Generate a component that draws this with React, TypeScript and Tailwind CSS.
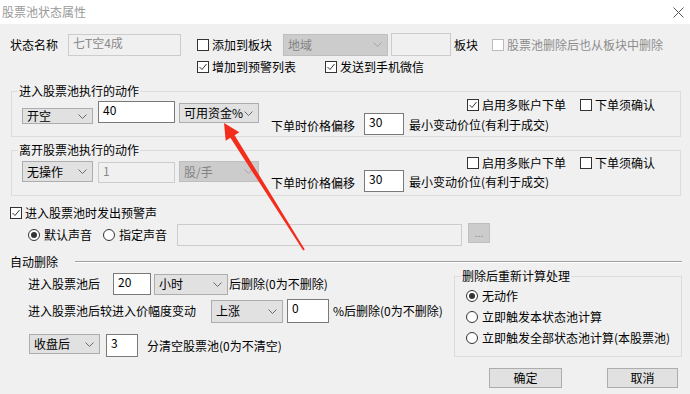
import { ReactNode } from "react";

function Chevron({ muted }: { muted?: boolean }) {
  return (
    <svg className="shrink-0" width="9" height="5" viewBox="0 0 9 5">
      <path d="M0.5 0.5 L4.5 4.5 L8.5 0.5" fill="none" stroke={muted ? "#a6a6a6" : "#6a6a6a"} />
    </svg>
  );
}

function Combo({ value, disabled, className = "" }: { value: string; disabled?: boolean; className?: string }) {
  return (
    <div
      className={`flex items-center justify-between pl-[4px] pr-[5px] border whitespace-nowrap ${
        disabled ? "bg-[#cccccc] border-[#bfbfbf] text-[#838383]" : "bg-[#e1e1e1] border-[#adadad]"
      } ${className}`}
    >
      <span>{value}</span>
      <Chevron muted={disabled} />
    </div>
  );
}

function Field({ value = "", disabled, className = "" }: { value?: string; disabled?: boolean; className?: string }) {
  return (
    <div
      className={`pl-[4px] pt-[1px] border ${
        disabled ? "bg-[#f0f0f0] border-[#cccccc] text-[#8a8a8a]" : "bg-white border-[#7a7a7a]"
      } ${className}`}
    >
      {value}
    </div>
  );
}

function Check({ label, checked, disabled, className = "" }: { label: string; checked?: boolean; disabled?: boolean; className?: string }) {
  return (
    <label className={`flex items-center gap-[3px] whitespace-nowrap ${disabled ? "text-[#8c8c8c]" : ""} ${className}`}>
      <span
        className={`w-[12px] h-[12px] border bg-white flex items-center justify-center ${
          disabled ? "border-[#bcbcbc]" : "border-[#333333]"
        }`}
      >
        {checked && (
          <svg width="10" height="10" viewBox="0 0 10 10">
            <path d="M1.5 5 L4 7.5 L8.5 2" fill="none" stroke="#333" strokeWidth="1" />
          </svg>
        )}
      </span>
      <span>{label}</span>
    </label>
  );
}

function Radio({ label, checked, className = "" }: { label: string; checked?: boolean; className?: string }) {
  return (
    <label className={`flex items-center gap-[4px] whitespace-nowrap ${className}`}>
      <span className="w-[12px] h-[12px] rounded-full border border-[#333333] bg-white flex items-center justify-center">
        {checked && <span className="w-[6px] h-[6px] rounded-full bg-[#333333]" />}
      </span>
      <span>{label}</span>
    </label>
  );
}

function Group({ title, className = "", children }: { title: string; className?: string; children: ReactNode }) {
  return (
    <fieldset className={`m-0 px-0 pt-0 border border-[#dcdcdc] ${className}`}>
      <legend className="ml-[6px] px-[1px] leading-[14px]">{title}</legend>
      {children}
    </fieldset>
  );
}

function Button({ children, className = "" }: { children: ReactNode; className?: string }) {
  return (
    <button className={`h-[20px] bg-[#e1e1e1] border border-[#adadad] flex items-center justify-center ${className}`}>
      {children}
    </button>
  );
}

export default function App() {
  return (
    <div className="w-[690px] h-[394px] bg-[#f0f0f0] relative overflow-hidden font-['Noto_Sans_CJK_SC',sans-serif] text-[12px] leading-[14px] text-black">
      {/* Title bar */}
      <div className="h-[24px] bg-white flex items-center justify-between pl-[2px] pr-[6px] text-[#9a9a9a]">
        <span>股票池状态属性</span>
        <svg width="11" height="11" viewBox="0 0 11 11">
          <path d="M0.5 0.5 L10.5 10.5 M10.5 0.5 L0.5 10.5" stroke="#555" strokeWidth="1" />
        </svg>
      </div>

      {/* Name row */}
      <div className="mt-[9px] h-[23px] flex items-center pl-[10px]">
        <span className="w-[58px]">状态名称</span>
        <Field disabled value="七T空4成" className="w-[113px] h-[22px]" />
        <Check label="添加到板块" className="ml-[16px] w-[86px]" />
        <Combo disabled value="地域" className="w-[105px] h-[22px]" />
        <Field disabled className="ml-[3px] w-[60px] h-[23px]" />
        <span className="ml-[3px]">板块</span>
        <Check disabled label="股票池删除后也从板块中删除" className="ml-[14px]" />
      </div>
      <div className="mt-[2px] h-[18px] flex items-center pl-[197px]">
        <Check checked label="增加到预警列表" className="w-[128px]" />
        <Check checked label="发送到手机微信" />
      </div>

      {/* Action groups */}
      <div className="pl-[11px]">
        <Group title="进入股票池执行的动作" className="mt-[8px] w-[670px] pb-[1px]">
          <div className="flex">
            <div className="flex items-start pl-[10px]">
              <Combo value="开空" className="w-[71px] h-[16px] mt-[10px]" />
              <Field value="40" className="ml-[5px] w-[77px] h-[22px] mt-[3px]" />
              <Combo value="可用资金%" className="ml-[4px] w-[80px] h-[20px] mt-[5px]" />
            </div>
            <div className="ml-[12px] flex flex-col">
              <div className="h-[14px] flex items-center pl-[196px]">
                <Check checked label="启用多账户下单" className="w-[113px]" />
                <Check label="下单须确认" />
              </div>
              <div className="mt-[1px] h-[22px] flex items-center">
                <span className="w-[93px] mt-[4px]">下单时价格偏移</span>
                <Field value="30" className="w-[40px] h-[22px]" />
                <span className="ml-[5px] mt-[2px]">最小变动价位(有利于成交)</span>
              </div>
            </div>
          </div>
        </Group>

        <Group title="离开股票池执行的动作" className="mt-[6px] w-[670px] pb-[3px]">
          <div className="flex">
            <div className="flex items-start pl-[10px]">
              <Combo value="无操作" className="w-[71px] h-[21px] mt-[4px]" />
              <Field disabled value="1" className="ml-[5px] w-[77px] h-[21px] mt-[5px]" />
              <Combo disabled value="股/手" className="ml-[4px] w-[80px] h-[21px] mt-[4px]" />
            </div>
            <div className="ml-[12px] flex flex-col">
              <div className="h-[11px] flex items-center pl-[196px]">
                <Check label="启用多账户下单" className="w-[113px]" />
                <Check label="下单须确认" />
              </div>
              <div className="mt-[2px] h-[22px] flex items-center">
                <span className="w-[93px] mt-[4px]">下单时价格偏移</span>
                <Field value="30" className="w-[40px] h-[22px]" />
                <span className="ml-[5px] mt-[2px]">最小变动价位(有利于成交)</span>
              </div>
            </div>
          </div>
        </Group>
      </div>

      {/* Alarm sound */}
      <div className="mt-[10px] h-[14px] flex items-center pl-[10px]">
        <Check checked label="进入股票池时发出预警声" />
      </div>
      <div className="mt-[3px] h-[23px] flex items-center pl-[28px]">
        <Radio checked label="默认声音" />
        <Radio label="指定声音" className="ml-[11px]" />
        <Field disabled className="ml-[10px] w-[285px] h-[22px]" />
        <button className="ml-[6px] w-[22px] h-[20px] self-start bg-[#cccccc] border border-[#bfbfbf] text-[#8a8a8a] text-[10px] leading-[10px]">
          ...
        </button>
      </div>

      {/* Auto delete */}
      <div className="mt-[9px] h-[14px] flex items-center pl-[10px] pr-[8px]">
        <span>自动删除</span>
        <div className="ml-[17px] flex-1 h-[2px] border-t border-b border-t-[#a0a0a0] border-b-white" />
      </div>

      <div className="flex">
        <div className="w-[454px] pl-[28px] flex flex-col">
          <div className="mt-[4px] h-[22px] flex items-center">
            <span className="w-[85px]">进入股票池后</span>
            <Field value="20" className="w-[38px] h-[22px]" />
            <Combo value="小时" className="ml-[3px] w-[74px] h-[21px]" />
            <span className="ml-[1px]">后删除(0为不删除)</span>
          </div>
          <div className="mt-[4px] h-[24px] flex items-center">
            <span className="w-[183px]">进入股票池后较进入价幅度变动</span>
            <Combo value="上涨" className="w-[72px] h-[23px]" />
            <Field value="0" className="ml-[4px] w-[42px] h-[24px]" />
            <span className="ml-[4px]">%后删除(0为不删除)</span>
          </div>
          <div className="mt-[11px] h-[23px] flex items-start pl-[1px]">
            <Combo value="收盘后" className="w-[71px] h-[20px]" />
            <Field value="3" className="ml-[6px] w-[32px] h-[23px]" />
            <span className="ml-[9px] self-center">分清空股票池(0为不清空)</span>
          </div>
        </div>

        <Group title="删除后重新计算处理" className="w-[228px] h-[88px]">
          <div className="pt-[2px] pl-[11px]">
            <div className="h-[21px] flex items-center">
              <Radio checked label="无动作" />
            </div>
            <div className="h-[21px] flex items-center">
              <Radio label="立即触发本状态池计算" />
            </div>
            <div className="h-[21px] flex items-center">
              <Radio label="立即触发全部状态池计算(本股票池)" />
            </div>
          </div>
        </Group>
      </div>

      {/* Dialog buttons */}
      <div className="mt-[11px] flex justify-end pr-[12px] gap-[45px]">
        <Button className="w-[73px]">确定</Button>
        <Button className="w-[71px]">取消</Button>
      </div>

      {/* Red annotation arrow */}
      <svg className="absolute left-0 top-0 pointer-events-none" width="690" height="394" viewBox="0 0 690 394">
        <polygon
          points="224,123 239.3,132.2 234.6,135.2 304.8,249.5 303.2,250.5 230.4,137.8 225.7,140.8"
          fill="#f42c1c"
        />
      </svg>
    </div>
  );
}
